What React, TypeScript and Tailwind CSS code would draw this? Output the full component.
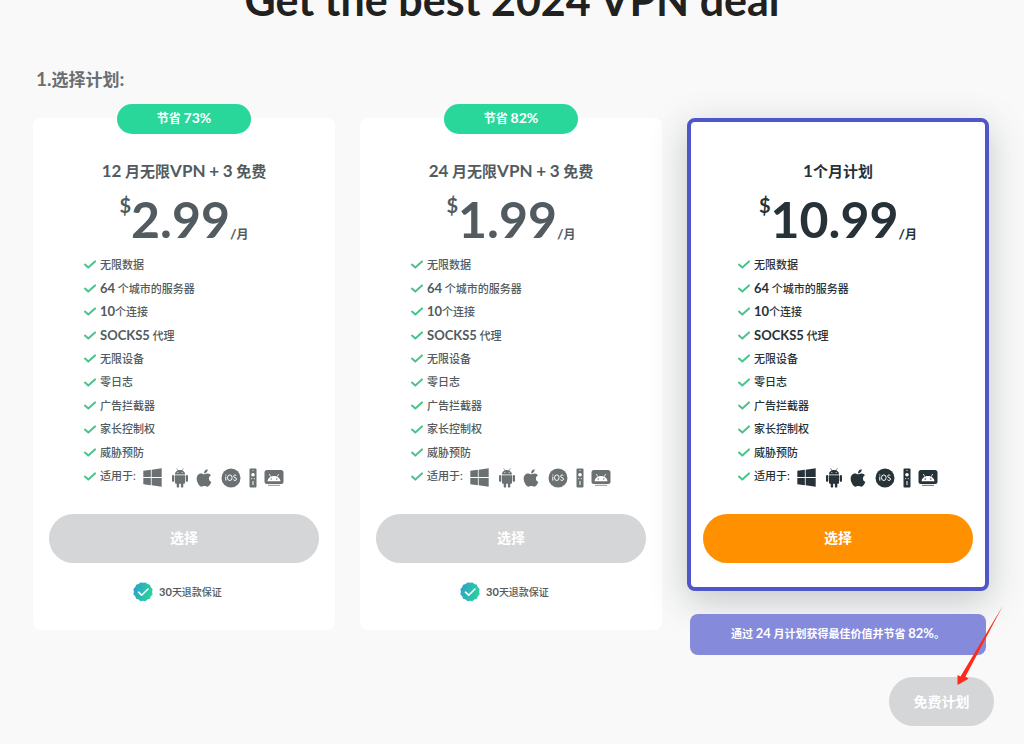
import React from 'react';
import { FaApple, FaWindows } from 'react-icons/fa';

/** Sets Latin runs in their own size beside the Chinese text. */
function Mixed({ text, latin }: { text: string; latin: string }) {
  return (
    <>
      {text.split(/([!-~]+)/).map((part, i) =>
        i % 2 ? (
          <span key={i} className={latin}>
            {part}
          </span>
        ) : (
          part
        ),
      )}
    </>
  );
}

const features = [
  '无限数据',
  '64 个城市的服务器',
  '10个连接',
  'SOCKS5 代理',
  '无限设备',
  '零日志',
  '广告拦截器',
  '家长控制权',
  '威胁预防',
];

function Check() {
  return (
    <svg viewBox="0 0 12 9" className="h-[9px] w-3 shrink-0" aria-hidden="true">
      <path d="M1 4.6 4.3 7.6 11 1.4" fill="none" stroke="#4cc38d" strokeWidth="2" strokeLinecap="round" strokeLinejoin="round" />
    </svg>
  );
}

function Android() {
  return (
    <svg viewBox="0 0 18 20" className="ml-[8px] h-5 w-[18px] shrink-0" aria-hidden="true">
      <g fill="currentColor">
        <path d="M4 6.400C4 3.900 6.200 2.100 9 2.100s5 1.800 5 4.300z" />
        <path d="M4 7.200h10v7.600a1 1 0 0 1-1 1H5a1 1 0 0 1-1-1z" />
        <rect x="1" y="7" width="2.300" height="7" rx="1.150" />
        <rect x="14.700" y="7" width="2.300" height="7" rx="1.150" />
        <rect x="5.700" y="14" width="2.400" height="5.600" rx="1.200" />
        <rect x="9.900" y="14" width="2.400" height="5.600" rx="1.200" />
      </g>
      <path d="m5.800.6 1.200 2M12.200.6l-1.200 2" stroke="currentColor" strokeWidth=".6" strokeLinecap="round" />
      <circle cx="6.900" cy="4.500" r=".5" fill="#fff" />
      <circle cx="11.100" cy="4.500" r=".5" fill="#fff" />
    </svg>
  );
}

function Ios() {
  return (
    <svg viewBox="0 0 20 20" className="ml-[7px] size-5 shrink-0" aria-hidden="true">
      <circle cx="10" cy="10" r="9.500" fill="currentColor" />
      <g fill="none" stroke="#fff" strokeWidth="1">
        <path d="M4.800 8.600v4M4.800 6.500v1" />
        <ellipse cx="8.800" cy="9.700" rx="2.300" ry="2.800" />
        <path d="M15.300 7.600c-.8-.9-2.700-.8-2.700.6 0 1.800 2.900 1 2.900 2.900 0 1.700-2.400 1.700-3.100.6" />
      </g>
    </svg>
  );
}

function Remote() {
  return (
    <svg viewBox="0 0 8 20" className="ml-2 h-5 w-2 shrink-0" aria-hidden="true">
      <rect x=".5" y=".5" width="7" height="19" rx="1" fill="currentColor" />
      <g fill="#fff">
        <circle cx="4" cy="2.500" r=".6" />
        <circle cx="4" cy="6.700" r="1.800" />
        <rect x="2.200" y="10.200" width="1" height="1" />
        <rect x="4.800" y="10.200" width="1" height="1" />
        <rect x="3.500" y="13" width="1" height="4" />
      </g>
    </svg>
  );
}

function AndroidTv() {
  return (
    <svg viewBox="0 0 20 18" className="ml-[7px] h-[18px] w-5 shrink-0" aria-hidden="true">
      <rect x=".5" y="1" width="19" height="14" rx="2.500" fill="currentColor" />
      <rect x="4" y="15.800" width="12" height="1.200" fill="currentColor" opacity=".6" />
      <path d="M3.500 12.300c.3-3.200 3-5.300 6.500-5.300s6.200 2.100 6.500 5.300z" fill="#fff" />
      <path d="m5.300 5 1.500 2.700M14.700 5l-1.500 2.700" stroke="#fff" strokeWidth=".8" />
      <circle cx="7.200" cy="10" r=".7" fill="currentColor" />
      <circle cx="12.800" cy="10" r=".7" fill="currentColor" />
    </svg>
  );
}

function Seal() {
  return (
    <svg viewBox="0 0 20 20" className="size-5 shrink-0" aria-hidden="true">
      <defs>
        <linearGradient id="seal" x1="0" y1="0" x2="1" y2="0.300">
          <stop offset="0" stopColor="#2b9fcb" />
          <stop offset="1" stopColor="#2bcf9f" />
        </linearGradient>
      </defs>
      <path
        fill="url(#seal)"
        d="M10 .8 12.500.4l1.900 1.700 2.500.7.900 2.400 1.800 1.900-.5 2.700.5 2.600-1.800 1.900-.9 2.400-2.500.7-1.900 1.800L10 18.800l-2.500.4-1.900-1.800-2.500-.7-.9-2.400-1.800-1.900.5-2.600-.5-2.700 1.800-1.900.9-2.400 2.500-.7L7.500.4z"
      />
      <path d="m5.500 10.200 3.200 3L15 7" fill="none" stroke="#fff" strokeWidth="1.600" strokeLinecap="round" strokeLinejoin="round" />
    </svg>
  );
}

type Plan = { title: string; price: string; save?: string; selected?: boolean };

const plans: Plan[] = [
  { title: '12 月无限VPN + 3 免费', price: '2.99', save: '节省 73%' },
  { title: '24 月无限VPN + 3 免费', price: '1.99', save: '节省 82%' },
  { title: '1个月计划', price: '10.99', selected: true },
];

function PlanCard({ title, price, save, selected }: Plan) {
  return (
    <section
      className={
        selected
          ? 'relative rounded-lg border-4 border-[#4e56c8] bg-white px-3 pt-[37px] pb-6 text-[#263238] shadow-[0_10px_36px_rgba(38,50,56,0.25)]'
          : 'relative rounded-lg bg-white px-4 pt-[41px] pb-7 text-[#515b60]'
      }
    >
      {save && (
        <div className="absolute inset-x-0 -top-[14px] flex justify-center">
          <span className="flex h-[30px] w-[134px] items-center justify-center rounded-full bg-[#2ad79b] pb-1 text-[12px] font-bold text-white">
            <span>
              <Mixed text={save} latin="text-[14px]" />
            </span>
          </span>
        </div>
      )}
      <h3 className="text-center text-[15px] leading-6 font-bold whitespace-nowrap">
        <Mixed text={title} latin="text-[17px]" />
      </h3>
      <p className="mt-3 flex h-12 justify-center font-bold">
        <span className="text-[20px] leading-5">$</span>
        <span className="text-[50px] leading-[48px]">{price}</span>
        <span className="self-end text-[12px] leading-4">
          <Mixed text="/月" latin="text-[14px]" />
        </span>
      </p>
      <ul className="mt-[10px] grid h-[235px] grid-rows-10 pl-[35px] text-[11px] font-medium whitespace-nowrap">
        {features.map((f) => (
          <li key={f} className="flex items-center gap-1">
            <Check />
            <span className="leading-5">
              <Mixed text={f} latin="text-[13px] font-bold" />
            </span>
          </li>
        ))}
        <li className="flex items-center">
          <Check />
          <span className="ml-1 leading-5">适用于:</span>
          <span className={selected ? 'ml-[6px] flex items-center pt-[3px]' : 'ml-[6px] flex items-center pt-[3px] text-[#6b7073]'}>
            <FaWindows className="size-[21px]" />
            <Android />
            <FaApple className="ml-[5px] size-5" />
            <Ios />
            <Remote />
            <AndroidTv />
          </span>
        </li>
      </ul>
      <button
        type="button"
        className={
          selected
            ? 'mt-[26px] h-[49px] w-full rounded-full bg-[#ff9100] pb-[2px] text-[14px] font-bold text-white'
            : 'mt-[26px] h-[49px] w-full rounded-full bg-[#d4d6d8] pb-[2px] text-[14px] font-bold text-white'
        }
      >
        选择
      </button>
      {!selected && (
        <p className="mt-[19px] flex h-5 items-center justify-center gap-[6px] pr-[17px] pl-1 text-[10px] font-medium">
          <Seal />
          <span>
            <Mixed text="30天退款保证" latin="text-[11px] font-bold" />
          </span>
        </p>
      )}
    </section>
  );
}

export default function App() {
  return (
    <main className="min-h-screen overflow-hidden bg-[#f9f9f9] font-['Lato','Noto_Sans_CJK_SC',sans-serif]">
      <h1 className="-mt-[26px] text-center text-[43px] leading-[52px] font-bold text-[#212121]">Get the best 2024 VPN deal</h1>
      <h2 className="mt-[41px] pl-9 text-[17px] leading-6 font-bold text-[#6b6e70]">
        <Mixed text="1.选择计划:" latin="text-[19px]" />
      </h2>
      <div className="mt-[26px] grid grid-cols-3 items-start gap-[25px] pr-[35px] pl-[33px]">
        {plans.slice(0, 2).map((p) => (
          <PlanCard key={p.price} {...p} />
        ))}
        <div className="flex flex-col">
          <PlanCard {...plans[2]} />
          <p className="relative mx-[3px] mt-[23px] flex h-[41px] items-center justify-center rounded-lg bg-[#858adb] pb-[2px] text-[11px] font-bold text-white">
            <span>
              <Mixed text="通过 24 月计划获得最佳价值并节省 82%。" latin="text-[13px]" />
            </span>
          </p>
          <div className="relative -mr-[5px] mt-[22px] self-end">
            <button type="button" className="h-[49px] w-[105px] rounded-full bg-[#d4d6d8] text-[14px] font-bold text-white">
              免费计划
            </button>
            <svg viewBox="0 0 48 82" className="pointer-events-none absolute -top-[73px] -right-[10px] h-[82px] w-12" aria-hidden="true">
              <path d="M47 1.500 9.500 72.500l3 2.200L1.500 81V71l3 1.500L6 70z" fill="#ff2a1a" />
            </svg>
          </div>
        </div>
      </div>
    </main>
  );
}
